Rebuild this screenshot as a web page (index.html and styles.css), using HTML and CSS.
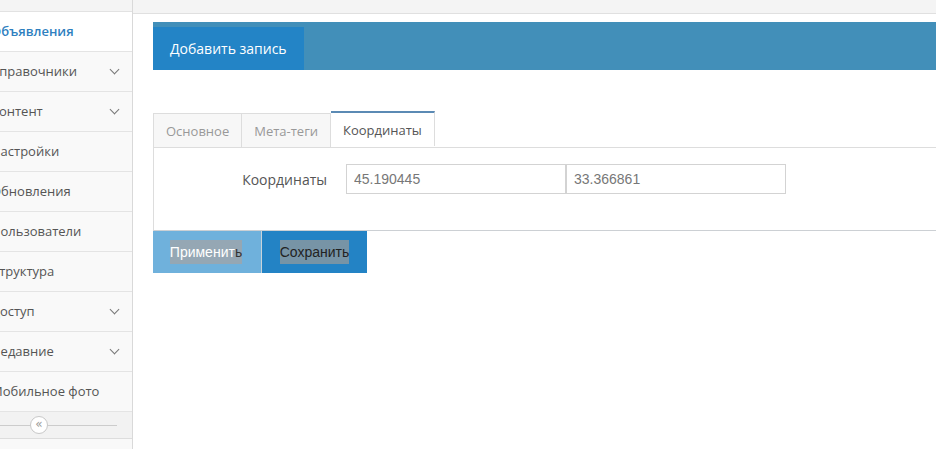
FILE: index.html
```html
<!DOCTYPE html>
<html lang="ru">
<head>
    <meta charset="UTF-8">
    <title>Объявления</title>
    <link rel="stylesheet" href="styles.css">
</head>
<body>
    <div class="sidebar">
        <div class="side-top"></div>
        <ul class="menu">
            <li class="active"><span>Объявления</span></li>
            <li><span>Справочники</span><i class="chev"></i></li>
            <li><span>Контент</span><i class="chev"></i></li>
            <li><span>Настройки</span></li>
            <li><span>Обновления</span></li>
            <li><span>Пользователи</span></li>
            <li><span>Структура</span></li>
            <li><span>Доступ</span><i class="chev"></i></li>
            <li><span>Недавние</span><i class="chev"></i></li>
            <li><span>Мобильное фото</span></li>
        </ul>
        <div class="collapse"><span class="circle">«</span></div>
    </div>
    <div class="main">
        <div class="topbar"></div>
        <div class="content">
            <div class="page-head">
                <button class="add-btn">Добавить запись</button>
            </div>
            <div class="tabs">
                <div class="tab">Основное</div>
                <div class="tab">Мета-теги</div>
                <div class="tab active">Координаты</div>
            </div>
            <div class="panel">
                <div class="row">
                    <label>Координаты</label>
                    <input type="text" value="45.190445">
                    <input type="text" value="33.366861">
                </div>
            </div>
            <div class="actions">
                <button class="btn apply"><span class="sel">Применит<b>ь</b></span></button>
                <button class="btn save"><span class="sel">Сохранить</span></button>
            </div>
        </div>
    </div>
</body>
</html>
```

FILE: styles.css
```css
html, body { margin: 0; padding: 0; height: 100%; overflow: hidden; }
body { display: flex; font-family: "Open Sans", "Liberation Sans", sans-serif; background: #fff; }

.sidebar { width: 132px; flex: none; background: #f9f9f9; border-right: 1px solid #d9d9d9; overflow: hidden; }
.side-top { height: 11px; background: #f4f4f4; border-bottom: 1px solid #e2e2e2; }
.menu { list-style: none; margin: 0 0 0 -20px; padding: 0; width: 152px; }
.menu li { height: 39px; border-bottom: 1px solid #e4e4e4; display: flex; align-items: center; justify-content: space-between; padding: 0 12px 1px 11px; box-sizing: content-box; width: 129px; height: 38px; font-size: 13px; color: #555; }
.menu li.active { background: #fff; color: #2f7fbf; font-weight: 600; box-shadow: inset -3px 0 0 #3a82bd; margin-right: -3px; padding-right: 15px; }
.chev { width: 6px; height: 6px; border-right: 1.3px solid #777; border-bottom: 1.3px solid #777; transform: rotate(45deg); margin: -4px 2px 0 0; }
.collapse { height: 26px; background: #f2f2f2; border-bottom: 1px solid #ddd; position: relative; display: flex; align-items: center; padding-left: 30px; }
.collapse::before { content: ""; position: absolute; left: 0; right: 15px; top: 13px; border-top: 1px solid #ccc; }
.circle { position: relative; width: 16px; height: 16px; border: 1px solid #c8c8c8; border-radius: 50%; background: #fff; color: #999; font-size: 12px; line-height: 15px; text-align: center; font-family: "DejaVu Sans", sans-serif; }

.main { flex: 1; min-width: 0; }
.topbar { height: 13px; background: #f4f4f4; border-bottom: 1px solid #e0e0e0; }
.content { padding: 8px 0 0 20px; }

.page-head { height: 48px; background: #428fb9; display: flex; align-items: flex-end; }
.add-btn { height: 43px; width: 151px; border: 0; background: #2384c6; color: #fff; font-family: "Open Sans", sans-serif; font-size: 14px; padding: 0 0 0 17px; text-align: left; }

.tabs { display: flex; margin-top: 43px; border-bottom: 1px solid #ddd; }
.tab { height: 33px; line-height: 34px; padding: 0 12px; font-size: 13px; color: #999; background: #f7f7f7; border: 1px solid #ddd; border-bottom: 0; border-left: 0; }
.tab:first-child { border-left: 1px solid #ddd; }
.tab.active { background: #fff; color: #555; border-top: 2px solid #5b8ab4; height: 33px; margin-top: -2px; margin-bottom: -1px; padding: 0 12px; }

.panel { height: 82px; border-left: 1px solid #ddd; border-bottom: 1px solid #ccd0d4; }
.row { display: flex; align-items: center; padding-top: 16px; }
.row label { width: 173px; text-align: right; font-size: 14px; color: #555; padding-right: 19px; }
.row input { margin: 0; padding: 0 7px; box-sizing: border-box; width: 220px; height: 30px; border: 1px solid #d3d3d3; font-family: "Liberation Sans", Arial, sans-serif; font-size: 14px; color: #777; }

.actions { display: flex; }
.btn { height: 42px; border: 0; margin: 0; font-family: "Liberation Sans", Arial, sans-serif; font-size: 14px; padding: 0; }
.btn.apply { width: 108px; background: #6fb1dc; border-right: 1px solid #c9d3da; width: 109px; }
.btn.save { width: 105px; background: #2383c5; }
.sel { display: inline-block; line-height: 24px; }
.apply .sel { background: #95a7b4; color: #fff; margin-left: -2px; }
.apply .sel b { font-weight: normal; color: #333; }
.save .sel { background: #7794a6; color: #222; }
```
